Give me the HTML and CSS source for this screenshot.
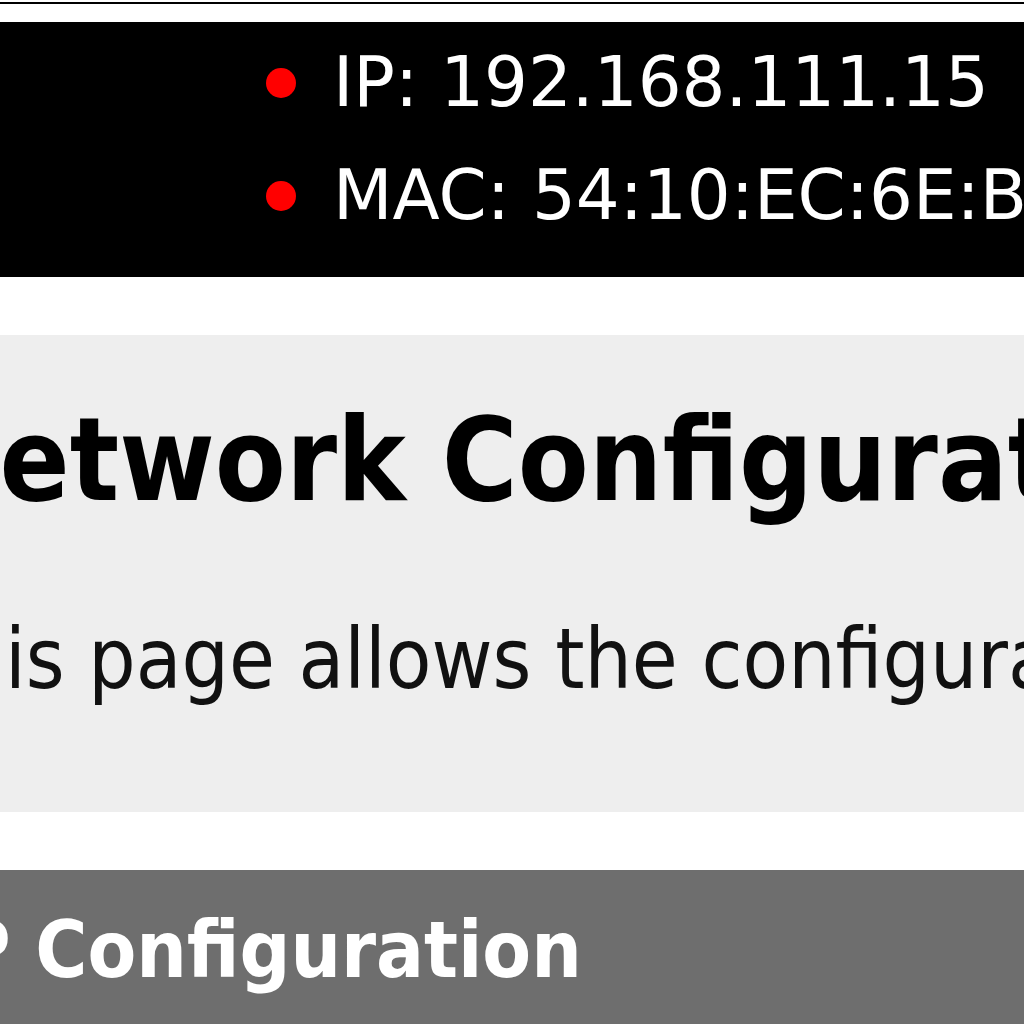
FILE: index.html
```html
<!DOCTYPE html>
<html lang="en">
<head>
<meta charset="UTF-8">
<meta name="viewport" content="width=device-width, initial-scale=1.0">
<title>Network Configuration</title>
<link rel="stylesheet" href="styles.css">
</head>
<body>
<div class="page">
    <div class="header">
        <ul class="status">
            <li><span>IP: 192.168.111.15</span></li>
            <li><span>MAC: 54:10:EC:6E:B2:4F</span></li>
        </ul>
    </div>
    <div class="intro">
        <h2>Network Configuration</h2>
        <p>This page allows the configuration of the network settings.</p>
    </div>
    <div class="section-title">IP Configuration</div>
</div>
</body>
</html>
```
FILE: styles.css
```css
html, body {
    margin: 0;
    padding: 0;
    overflow: hidden;
    background-color: #ffffff;
}
body {
    font-family: "DejaVu Sans", Verdana, sans-serif;
    white-space: nowrap;
}
.page {
    margin-top: 2px;
    border-top: 2px solid #000000;
    padding-top: 18px;
}
.header {
    background-color: #000000;
    color: #ffffff;
    height: 255px;
    padding-top: 4px;
    box-sizing: border-box;
}
.status {
    list-style: none;
    margin: 0;
    padding: 0 0 0 266px;
    font-size: 69px;
    line-height: 113px;
}
.status li {
    display: flex;
    align-items: center;
    gap: 37px;
}
.status li:before {
    content: "";
    width: 30px;
    height: 30px;
    border-radius: 50%;
    background-color: #ff0000;
    flex: none;
}
.intro {
    margin-top: 58px;
    background-color: #eeeeee;
    height: 477px;
    padding: 58px 0 0 0;
    box-sizing: border-box;
}
.intro h2 {
    margin: 0 0 0 -87px;
    font-family: "DejaVu Sans Condensed", "DejaVu Sans", sans-serif;
    font-weight: bold;
    font-size: 115px;
    color: #000000;
}
.intro p {
    margin: 84px 0 0 -88px;
    font-family: "DejaVu Sans Condensed", "DejaVu Sans", sans-serif;
    font-size: 83px;
    color: #111111;
}
.section-title {
    margin-top: 58px;
    background-color: #6e6e6e;
    color: #ffffff;
    height: 200px;
    padding: 34px 0 0 0;
    box-sizing: border-box;
    text-indent: -68px;
    font-family: "DejaVu Sans Condensed", "DejaVu Sans", sans-serif;
    font-weight: bold;
    font-size: 79px;
}
```
